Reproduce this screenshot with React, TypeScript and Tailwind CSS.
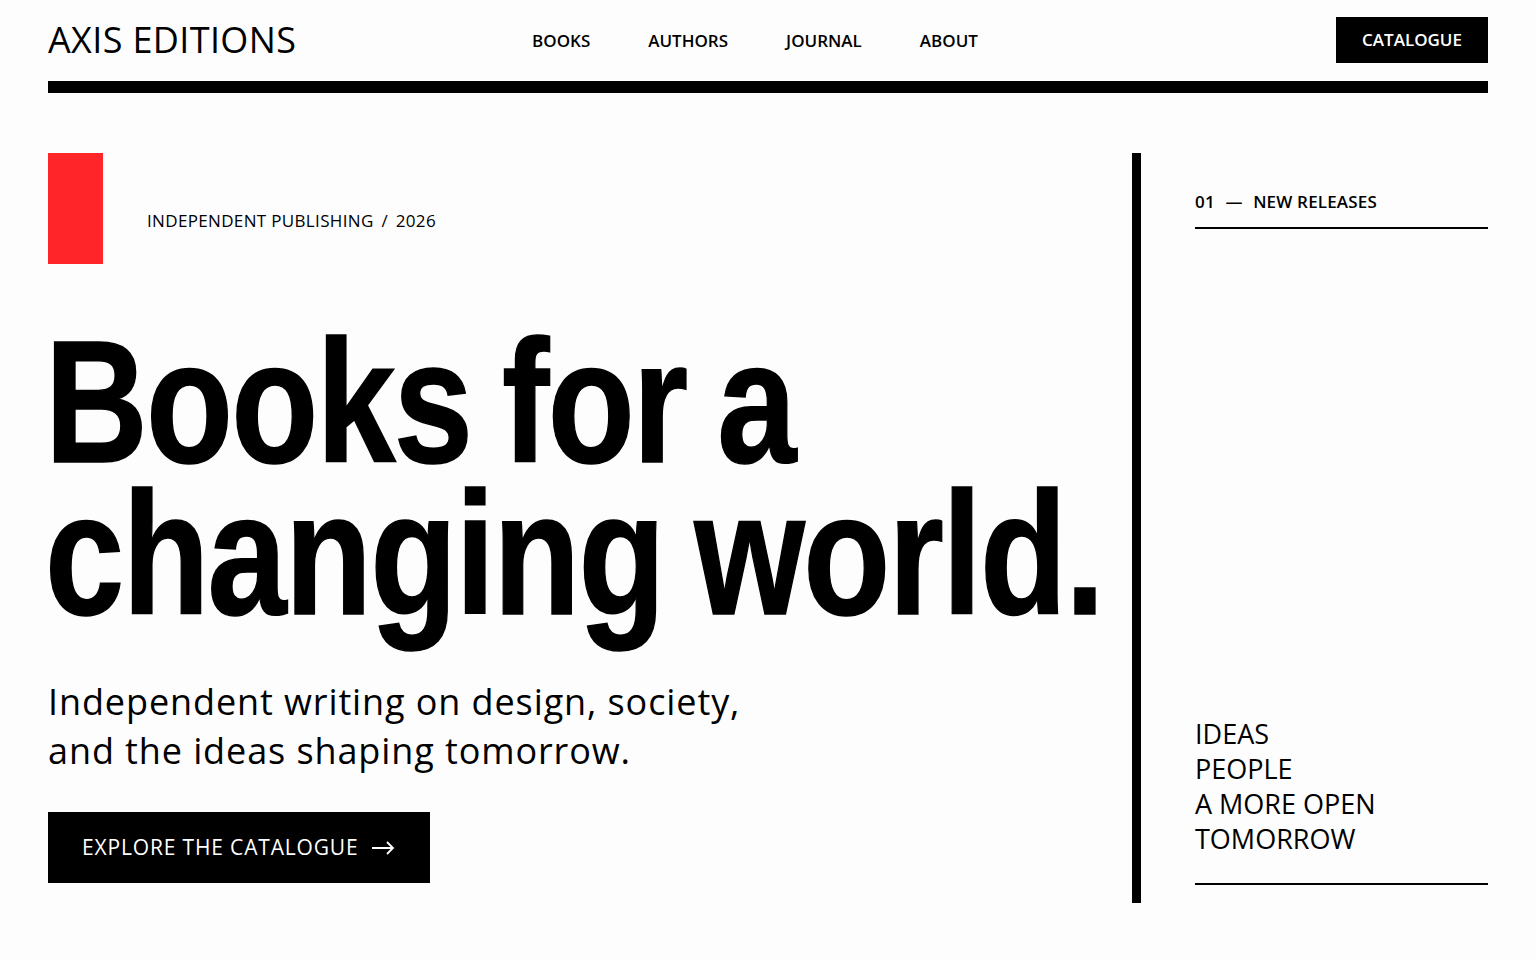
import React from 'react';

const NAV = ['BOOKS', 'AUTHORS', 'JOURNAL', 'ABOUT'];
const TAGS = ['IDEAS', 'PEOPLE', 'A MORE OPEN', 'TOMORROW'];

export default function App() {
  return (
    <div className="min-h-screen bg-[#fdfdfd] text-black font-['Open_Sans',sans-serif]">
      <div className="mx-auto max-w-[1440px]">
        <Header />
        <div className="h-[12px] bg-black" />
        <main className="flex pt-[60px]">
          <Hero />
          <div className="w-[9px] flex-none bg-black" />
          <Aside />
        </main>
      </div>
    </div>
  );
}

function Header() {
  return (
    <header className="grid grid-cols-[1fr_auto_1fr] items-center pt-[17px] pb-[18px]">
      <a href="#" className="text-[36px] leading-none tracking-[0.01em] whitespace-nowrap">
        AXIS EDITIONS
      </a>
      <nav className="flex gap-[58px] pr-[26px] pt-[2px] text-[17px] font-semibold">
        {NAV.map((n) => (
          <a key={n} href="#">
            {n}
          </a>
        ))}
      </nav>
      <div className="flex justify-end">
        <button className="h-[46px] bg-black px-[26px] text-[17px] font-semibold text-white">
          CATALOGUE
        </button>
      </div>
    </header>
  );
}

function Hero() {
  return (
    <section className="flex min-w-0 flex-1 flex-col pb-[20px]">
      <div className="flex items-center gap-[44px]">
        <div className="h-[111px] w-[55px] flex-none bg-[#ff2529]" />
        <p className="mt-[24px] text-[17px] tracking-[0.02em]">
          INDEPENDENT PUBLISHING <span className="mx-[3px]">/</span> 2026
        </p>
      </div>

      {/* headline face is a narrow grotesk; squeeze Liberation Sans to match */}
      <h1 className="-ml-[3px] mt-[62px] origin-left scale-x-[0.813] font-['Liberation_Sans',Arial,sans-serif] text-[175px] font-bold leading-[152px] tracking-[-0.012em] [word-spacing:-0.05em] [-webkit-text-stroke:1.5px_black] whitespace-nowrap">
        Books for a
        <br />
        changing world.
      </h1>

      <p className="mt-[47px] text-[36px] leading-[49px] tracking-[0.025em]">
        Independent writing on design, society,
        <br />
        and the ideas shaping tomorrow.
      </p>

      <div className="mt-[37px]">
        <button className="flex h-[71px] items-center gap-[13px] bg-black pl-[34px] pr-[35px] text-[21px] tracking-[0.04em] text-white">
          EXPLORE THE CATALOGUE
          <svg width="23" height="14" viewBox="0 0 23 14" fill="none" stroke="currentColor" strokeWidth="1.8">
            <path d="M0 7h21M15 1l6 6-6 6" />
          </svg>
        </button>
      </div>
    </section>
  );
}

function Aside() {
  return (
    <aside className="ml-[54px] flex w-[293px] flex-none flex-col justify-between pt-[36px] pb-[18px]">
      <div className="border-b-2 border-black pb-[12px] text-[17px] font-semibold tracking-[0.01em]">
        01 <span className="mx-[6px]">—</span> NEW RELEASES
      </div>
      <div className="border-b-2 border-black pb-[27px] text-[27px] leading-[35px]">
        {TAGS.map((t) => (
          <div key={t}>{t}</div>
        ))}
      </div>
    </aside>
  );
}
